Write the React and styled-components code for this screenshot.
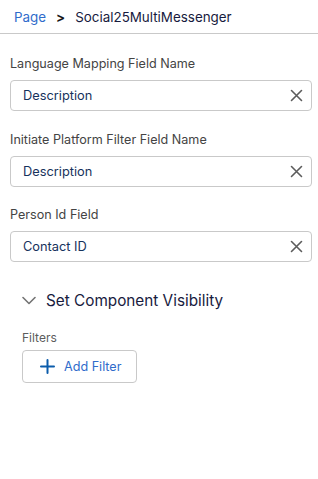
import React from 'react'
import styled, { createGlobalStyle } from 'styled-components'

const GlobalStyle = createGlobalStyle`
  body {
    margin: 0;
    background: #fff;
    font-family: Inter, "Liberation Sans", sans-serif;
  }
`

const fields = [
  { label: 'Language Mapping Field Name', value: 'Description' },
  { label: 'Initiate Platform Filter Field Name', value: 'Description' },
  { label: 'Person Id Field', value: 'Contact ID' },
]

export default function App() {
  return (
    <Panel>
      <GlobalStyle />
      <Breadcrumb>
        <Crumb>Page</Crumb>
        <Sep>&gt;</Sep>
        <Current>Social25MultiMessenger</Current>
      </Breadcrumb>
      <Body>
        {fields.map((f, i) => (
          <Field key={i} $last={i === fields.length - 1}>
            <Label>{f.label}</Label>
            <InputBox>
              <Value>{f.value}</Value>
              <ClearIcon />
            </InputBox>
          </Field>
        ))}
        <Section>
          <SectionHeader>
            <Chevron />
            <SectionTitle>Set Component Visibility</SectionTitle>
          </SectionHeader>
          <SubLabel>Filters</SubLabel>
          <AddButton>
            <PlusIcon />
            Add Filter
          </AddButton>
        </Section>
      </Body>
    </Panel>
  )
}

function ClearIcon() {
  return (
    <svg width="13" height="13" viewBox="0 0 13 13">
      <path d="M1.5 1.5 L11.5 11.5 M11.5 1.5 L1.5 11.5" stroke="#5c5c5c" strokeWidth="1.6" strokeLinecap="round" />
    </svg>
  )
}

function Chevron() {
  return (
    <svg width="14" height="9" viewBox="0 0 14 9">
      <path d="M1 1.5 L7 7.5 L13 1.5" stroke="#747474" strokeWidth="1.6" fill="none" strokeLinecap="round" strokeLinejoin="round" />
    </svg>
  )
}

function PlusIcon() {
  return (
    <svg width="15" height="15" viewBox="0 0 15 15">
      <path d="M7.5 1 V14 M1 7.5 H14" stroke="#0b5cab" strokeWidth="2" strokeLinecap="round" />
    </svg>
  )
}

const Panel = styled.div`
  width: 318px;
  min-height: 479px;
  background: #fff;
`

const Breadcrumb = styled.div`
  display: flex;
  align-items: center;
  height: 34px;
  padding: 0 14px;
  border-bottom: 1px solid #c9c9c9;
  font-size: 13.4px;
  box-sizing: border-box;
`

const Crumb = styled.span`
  color: #2f6ccb;
`

const Sep = styled.span`
  color: #181818;
  font-weight: 700;
  margin: 0 10px 0 10px;
`

const Current = styled.span`
  color: #181b3e;
`

const Body = styled.div`
  padding: 21px 6px 0 10px;
`

const Field = styled.div`
  margin-bottom: ${p => (p.$last ? '20px' : '19.5px')};
`

const Label = styled.div`
  font-size: 12.6px;
  color: #444;
  line-height: 18px;
  margin-bottom: 7px;
`

const InputBox = styled.div`
  display: flex;
  align-items: center;
  justify-content: space-between;
  height: 31px;
  border: 1px solid #c9c9c9;
  border-radius: 4px;
  padding: 0 8px 0 12px;
  box-sizing: border-box;
`

const Value = styled.span`
  font-size: 12.8px;
  color: #16325c;
`

const Section = styled.div`
  padding: 6px 0 0 12px;
`

const SectionHeader = styled.div`
  display: flex;
  align-items: center;
  gap: 10px;
  height: 24px;
`

const SectionTitle = styled.span`
  font-size: 15.3px;
  color: #181b3e;
`

const SubLabel = styled.div`
  font-size: 12px;
  color: #5c5c5c;
  margin: 18px 0 5px;
`

const AddButton = styled.button`
  display: inline-flex;
  align-items: center;
  gap: 9px;
  height: 33px;
  padding: 0 15px 0 17px;
  border: 1px solid #c9c9c9;
  border-radius: 4px;
  background: #fff;
  color: #2f6ccb;
  font-family: inherit;
  font-size: 12.6px;
`
